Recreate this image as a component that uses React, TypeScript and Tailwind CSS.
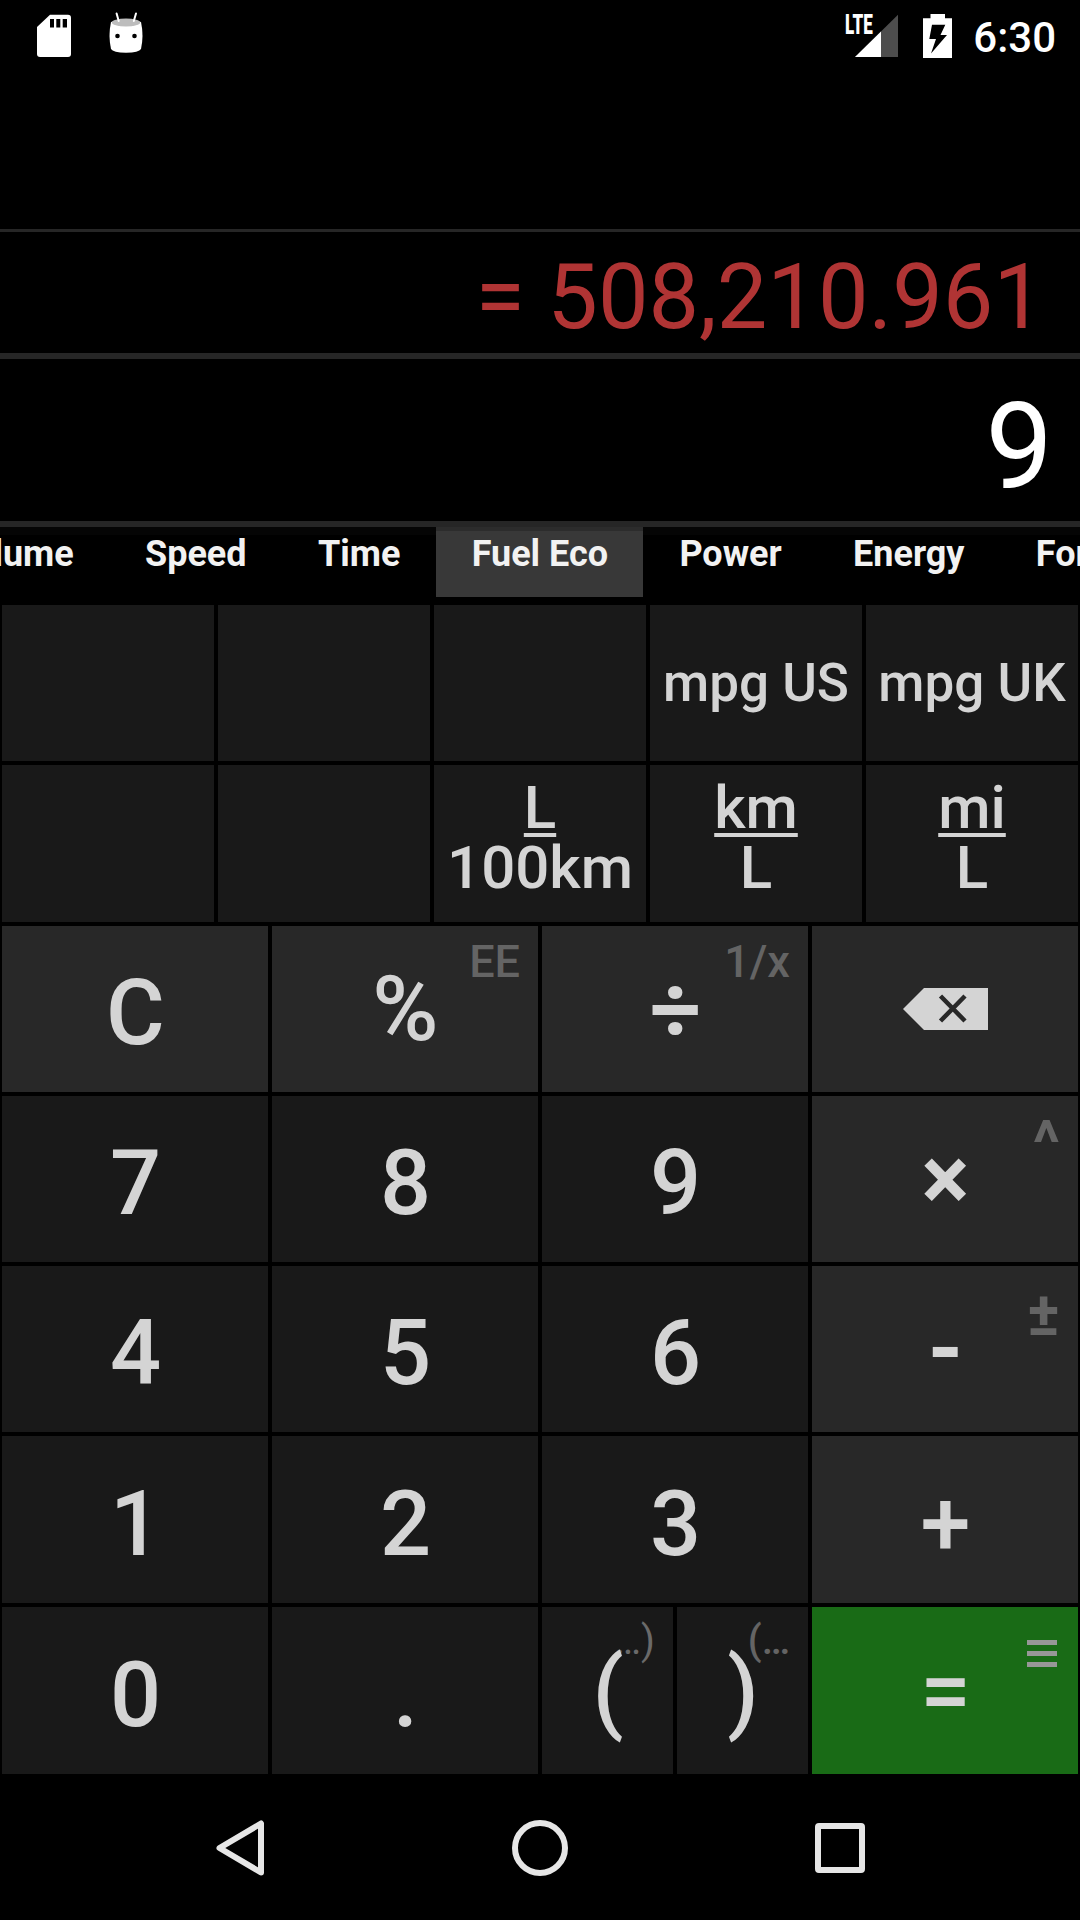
import type { ReactNode } from "react";

type KeyProps = {
  children?: ReactNode;
  hint?: ReactNode;
  hintClass?: string;
  bg?: string;
  textClass?: string;
};

function Key({
  children,
  hint,
  hintClass = "top-[13px] right-[18px] text-[45px] font-medium text-[#646464]",
  bg = "bg-[#191919]",
  textClass = "pt-[10px] font-medium",
}: KeyProps) {
  return (
    <button className={`relative m-0.5 flex min-w-0 items-center justify-center ${bg}`}>
      {hint && (
        <span className={`absolute leading-none whitespace-nowrap ${hintClass}`}>{hint}</span>
      )}
      <span className={`relative pl-px text-[90px] leading-none text-[#d4d4d4] ${textClass}`}>
        {children}
      </span>
    </button>
  );
}

function UnitKey({ children, className = "" }: { children?: ReactNode; className?: string }) {
  return (
    <button
      className={`m-0.5 flex min-w-0 flex-col items-center justify-center bg-[#191919] font-medium whitespace-nowrap text-[#d4d4d4] ${className}`}
    >
      {children}
    </button>
  );
}

function Fraction({ top, bottom }: { top: string; bottom: string }) {
  return (
    <UnitKey className="pb-[12px]">
      <span className="h-[60px] text-[60px] leading-[60px] underline decoration-[4px] underline-offset-[5px]">{top}</span>
      <span className="h-[60px] text-[60px] leading-[60px]">{bottom}</span>
    </UnitKey>
  );
}

function StatusBar() {
  return (
    <header className="flex h-[72px] items-start justify-between">
      <div className="flex">
        <svg className="ml-[37px] mt-[14px] h-[44px] w-[35px]" viewBox="0 0 35 44">
          <path d="M13 .7H31Q34 .7 34 3.7V40Q34 43 31 43H3Q0 43 0 40V13Z" fill="#fff" />
          <path d="M13 5H17V13.5H13ZM19.3 5H23.3V13.5H19.3ZM25.7 5H30V13.5H25.7Z" fill="#000" />
        </svg>
        <svg className="ml-[37px] mt-[12px] h-[42px] w-[34px]" viewBox="0 0 34 42">
          <path d="M2 10Q17 5 32 10Q35 24 32 37Q30 40.7 17 40.7Q4 40.7 2 37Q-1 24 2 10Z" fill="#fff" />
          <ellipse cx="17" cy="10.5" rx="14.3" ry="4" fill="#bdbdbd" />
          <path d="M7.6 1.5L9.7 9M27 1.5L24.8 9" stroke="#fff" strokeWidth="2" strokeLinecap="round" />
          <circle cx="8.5" cy="24" r="2.3" fill="#000" />
          <circle cx="25.5" cy="24" r="2.3" fill="#000" />
        </svg>
      </div>
      <div className="flex">
        <div className="relative mt-[14px] h-[44px] w-[54px]">
          <svg className="h-[44px] w-[54px]" viewBox="0 0 54 44">
            <path d="M53 .7V43H10Z" fill="#4d4d4d" />
            <path d="M36 17.4V43H10Z" fill="#fff" />
          </svg>
          <span className="absolute top-[-2px] left-0 origin-left scale-x-[0.63] text-[27px] leading-none font-black text-white">
            LTE
          </span>
        </div>
        <svg className="ml-[24px] mt-[14px] h-[44px] w-[30px]" viewBox="0 0 30 44">
          <path d="M7.5 0H22V4.3H29V44H0V4.3H7.5Z" fill="#fff" />
          <path d="M9 10.7H22.3L17.5 21H24L8 39.5L13 25H6.3Z" fill="#000" />
        </svg>
        <span className="mt-[17px] mr-[24px] ml-[20px] text-[42px] leading-[42px] font-medium text-white">6:30</span>
      </div>
    </header>
  );
}

const tabs = ["Volume", "Speed", "Time", "Fuel Eco", "Power", "Energy", "Force"];

export default function App() {
  return (
    <div className="flex h-[1920px] w-[1080px] flex-col overflow-hidden bg-black font-['Roboto',sans-serif]">
      <StatusBar />

      <section className="flex flex-col">
        <div className="h-[160px] border-b-[3px] border-[#262626]" />
        <div className="flex h-[127px] items-center justify-end border-b-[6px] border-[#262626] pt-[11px] pr-[36px] text-[90px] leading-none text-[#b03434]">
          = 508,210.961
        </div>
        <div className="flex h-[168px] items-center justify-end border-b-[6px] border-[#262626] pt-[14px] pr-[27px] text-[120px] leading-none text-white">
          9
        </div>
      </section>

      <nav className="flex h-[76px] items-start">
        <div className="flex h-[70px] w-[109px] shrink-0 justify-end">
          {tabs.slice(0, 1).map((t) => (
            <Tab key={t} label={t} />
          ))}
        </div>
        {tabs.slice(1).map((t) => (
          <Tab key={t} label={t} active={t === "Fuel Eco"} />
        ))}
      </nav>

      <section className="grid grid-cols-5 grid-rows-[160px_161px]">
        <UnitKey />
        <UnitKey />
        <UnitKey />
        <UnitKey>
          <span className="text-[53px] leading-none">mpg US</span>
        </UnitKey>
        <UnitKey>
          <span className="text-[53px] leading-none">mpg UK</span>
        </UnitKey>
        <UnitKey />
        <UnitKey />
        <Fraction top="L" bottom="100km" />
        <Fraction top="km" bottom="L" />
        <Fraction top="mi" bottom="L" />
      </section>

      <section className="grid grid-cols-4 grid-rows-[170px_170px_170px_171px_171px]">
        <Key bg="bg-[#282828]">C</Key>
        <Key bg="bg-[#282828]" hint="EE" textClass="pt-[2px] font-medium">%</Key>
        <Key bg="bg-[#282828]" hint="1/x" textClass="pt-[3px] font-bold">÷</Key>
        <button className="m-0.5 flex items-center justify-center bg-[#282828]">
          <svg className="h-[42px] w-[85px]" viewBox="0 0 85 42">
            <path d="M0 21L21 0H85V42H21Z" fill="#d4d4d4" />
            <path d="M37.5 8L62 33M62 8L37.5 33" stroke="#282828" strokeWidth="4.5" />
          </svg>
        </button>

        <Key>7</Key>
        <Key>8</Key>
        <Key>9</Key>
        <Key
          bg="bg-[#282828]"
          hint="^"
          hintClass="top-[16px] right-[18px] text-[62px] font-bold text-[#646464]"
          textClass="pt-[2px] font-bold"
        >
          ×
        </Key>

        <Key>4</Key>
        <Key>5</Key>
        <Key>6</Key>
        <Key
          bg="bg-[#282828]"
          hint="±"
          hintClass="top-[18px] right-[18px] text-[61px] font-bold text-[#646464]"
          textClass="pt-[2px] font-bold"
        >
          -
        </Key>

        <Key>1</Key>
        <Key>2</Key>
        <Key>3</Key>
        <Key bg="bg-[#282828]">+</Key>

        <Key>0</Key>
        <Key>.</Key>
        <div className="grid grid-cols-2">
          <Key
            hint={"…)"}
            hintClass="top-[14px] right-[18px] text-[40px] font-normal text-[#6a6a6a]"
            textClass="pt-[2px] font-medium"
          >
            (
          </Key>
          <Key
            hint={"(…"}
            hintClass="top-[14px] right-[18px] text-[40px] font-medium text-[#646464]"
            textClass="pt-[2px] font-medium"
          >
            )
          </Key>
        </div>
        <Key
          bg="bg-[#196b16]"
          hintClass="top-[33px] right-[21px]"
          hint={
            <svg className="h-[27px] w-[30px]" viewBox="0 0 30 27">
              <path d="M0 2.5H30M0 13.5H30M0 24.5H30" stroke="#979797" strokeWidth="5" />
            </svg>
          }
          textClass="pt-[2px] font-medium"
        >
          =
        </Key>
      </section>

      <footer className="flex flex-1 items-start pt-[44px]">
        <svg className="ml-[216px] h-[56px] w-[48px]" viewBox="0 0 48 56">
          <path d="M45 3.5V52.5L3.5 28Z" fill="none" stroke="#e6e6e6" strokeWidth="6" strokeLinejoin="round" />
        </svg>
        <svg className="ml-[248px] h-[56px] w-[56px]" viewBox="0 0 56 56">
          <circle cx="28" cy="28" r="25" fill="none" stroke="#e6e6e6" strokeWidth="6" />
        </svg>
        <div className="mt-[3px] ml-[247px] h-[50px] w-[50px] rounded-[4px] border-6 border-[#e6e6e6]" />
      </footer>
    </div>
  );
}

function Tab({ label, active = false }: { label: string; active?: boolean }) {
  return (
    <button
      className={`flex h-[70px] shrink-0 items-start pr-[35.3px] pl-[36px] text-[36px] leading-[36px] font-bold whitespace-nowrap text-[#f2f2f2] ${
        active ? "border-t-4 border-[#2c2c2c] bg-[#383838] pt-[5px]" : "border-t-8 border-[#050505] pt-px"
      }`}
    >
      {label}
    </button>
  );
}
